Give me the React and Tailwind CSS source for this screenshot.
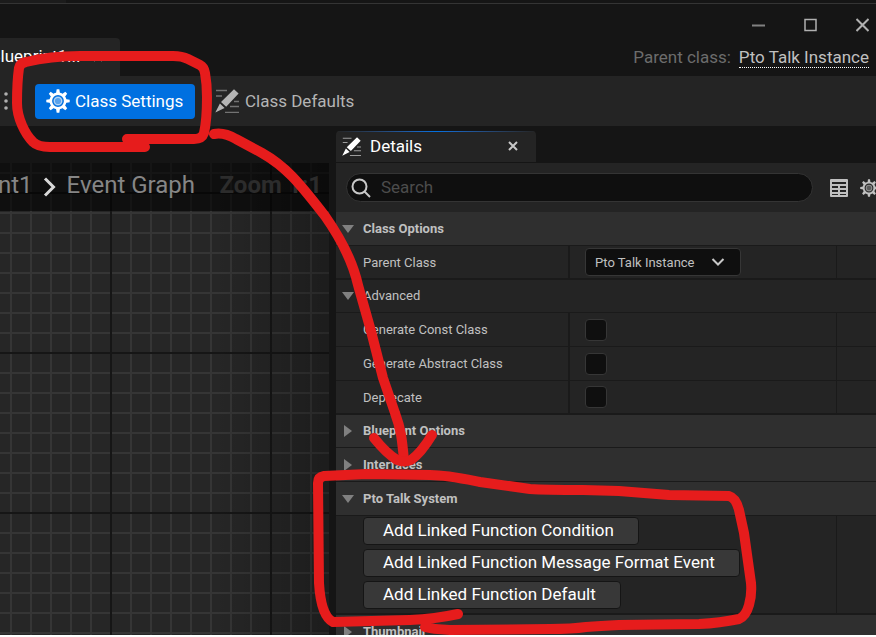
import React from "react";

function Gear({ size, className = "" }) {
  return (
    <svg width={size} height={size} viewBox="0 0 24 24" fill="none" className={"shrink-0 " + className} aria-hidden="true">
      <circle cx="12" cy="12" r="7.200" stroke="currentColor" strokeWidth="2.600" />
      <circle cx="12" cy="12" r="3.800" fill="currentColor" fillOpacity="0.35" stroke="currentColor" strokeOpacity="0.6" strokeWidth="1.400" />
      {[0, 45, 90, 135, 180, 225, 270, 315].map((a) => (
        <path key={a} d="M9.900 5 10.700 0.300h2.600L14.100 5z" fill="currentColor" transform={`rotate(${a} 12 12)`} />
      ))}
    </svg>
  );
}

function PencilLines({ size, className = "" }) {
  return (
    <svg width={size} height={size} viewBox="0 0 24 24" className={"shrink-0 " + className} aria-hidden="true">
      <path d="M1 1.500h11M1 7h6M19 12.500h5M15 17.500h9M10 23.300h14" stroke="currentColor" strokeWidth="1.300" opacity="0.55" />
      <path d="M19 0.300 23.600 4.600 11.200 17.800 6 13zM4.900 14.400 9.600 18.900 0.300 23.600z" fill="currentColor" />
    </svg>
  );
}

function Triangle({ open }) {
  return (
    <svg width="14" height="14" viewBox="0 0 14 14" className="shrink-0 text-[#808080]" aria-hidden="true">
      <path d={open ? "M1 3h12L7 11z" : "M3 1v12L11 7z"} fill="currentColor" />
    </svg>
  );
}

function Header({ title, open, className = "" }) {
  return (
    <button type="button" aria-expanded={open} className={"flex w-full shrink-0 items-center gap-2 border-b border-[#1a1a1a] bg-[#2f2f2f] pl-[5px] text-left text-[13px] font-bold text-[#c0c0c0] " + className}>
      <Triangle open={open} />
      {title}
    </button>
  );
}

function Row({ label, id, last, children }) {
  return (
    <div className={"flex h-[34px] shrink-0 border-[#1a1a1a] " + (last ? "border-b-2" : "border-b")}>
      <label htmlFor={id} className="flex w-[234px] shrink-0 items-center border-r-2 border-[#1a1a1a] pl-[27px] pt-px text-[13px] text-[#c0c0c0]">
        {label}
      </label>
      <div className="flex flex-1 items-center pl-[15px]">{children}</div>
      <div className="w-10 shrink-0 border-l border-[#1a1a1a]" />
    </div>
  );
}

function Check({ id }) {
  return <input id={id} type="checkbox" className="size-[22px] appearance-none rounded border border-[#363636] bg-[#0f0f0f] checked:bg-[#0070e0]" />;
}

function Graph() {
  return (
    <section className="relative w-[329px] shrink-0 overflow-hidden bg-[#262626]">
      <svg className="absolute inset-0 size-full" aria-hidden="true">
        <defs>
          <pattern id="minor" x="10" y="9" width="20" height="20" patternUnits="userSpaceOnUse">
            <path d="M0 1H20M1 0V20" stroke="#353535" strokeWidth="2" />
          </pattern>
          <pattern id="major" x="110" y="29" width="160" height="160" patternUnits="userSpaceOnUse">
            <path d="M0 1H160M1 0V160" stroke="#161616" strokeWidth="2" />
          </pattern>
          <linearGradient id="edge">
            <stop offset="0.65" stopColor="#000" stopOpacity="0" />
            <stop offset="1" stopColor="#000" stopOpacity="0.25" />
          </linearGradient>
        </defs>
        <rect width="100%" height="100%" fill="url(#minor)" />
        <rect width="100%" height="100%" fill="url(#major)" />
        <rect width="100%" height="100%" fill="url(#edge)" />
      </svg>
      <div className="relative flex h-12 items-center whitespace-nowrap bg-black/60 pb-1 text-2xl text-[#868686]">
        <span className="-ml-0.5">nt1</span>
        <svg width="14" height="22" viewBox="0 0 14 22" className="ml-[10px] mt-1 shrink-0" fill="none" stroke="#d8d8d8" strokeWidth="3" aria-hidden="true">
          <path d="M2 2.500 10.500 11 2 19.500" />
        </svg>
        <span className="ml-[10px]">Event Graph</span>
        <span className="ml-auto pr-[7px] font-bold text-[#2c2c2c]">Zoom 1:1</span>
      </div>
    </section>
  );
}

function Details() {
  return (
    <section className="flex min-w-0 flex-1 flex-col overflow-hidden bg-[#242424]">
      <div className="flex h-[49px] shrink-0 items-center pl-[10px]">
        <div className="-mr-[3px] flex h-[29px] min-w-0 flex-1 items-center gap-[10px] rounded-full border border-[#343434] bg-[#0f0f0f] pl-1">
          <svg width="20" height="20" viewBox="0 0 20 20" fill="none" stroke="#c8c8c8" strokeWidth="2" className="shrink-0" aria-hidden="true">
            <circle cx="8.500" cy="8.500" r="7" />
            <path d="m13.500 13.500 5.500 5.500" />
          </svg>
          <input aria-label="Search" placeholder="Search" className="min-w-0 flex-1 bg-transparent pb-0.5 text-[17px] leading-6 text-[#c0c0c0] outline-none placeholder:text-[#4c4c4c]" />
        </div>
        <button type="button" aria-label="Property matrix" className="ml-5 shrink-0">
          <svg width="18" height="18" viewBox="0 0 18 18" aria-hidden="true">
            <rect width="18" height="18" rx="1" fill="#c0c0c0" />
            <path d="M2 3h14v2H2zM2 7h6v2H2zM10 7h6v2h-6zM2 11h6v2H2zM10 11h6v2h-6zM2 15h6v1H2zM10 15h6v1h-6z" fill="#242424" />
          </svg>
        </button>
        <button type="button" aria-label="Settings" className="-mr-0.5 ml-3 shrink-0 text-[#c0c0c0]">
          <Gear size={18} />
        </button>
      </div>
      <Header title="Class Options" open className="h-[34px]" />
      <Row label="Parent Class" id="parent" last>
        <span className="relative flex items-center">
          <select id="parent" className="h-7 w-[156px] appearance-none rounded border border-[#363636] bg-[#0f0f0f] pl-[9px] pt-px text-[13px] text-[#c0c0c0]">
            <option>Pto Talk Instance</option>
          </select>
          <svg width="14" height="10" viewBox="0 0 14 10" fill="none" stroke="#c8c8c8" strokeWidth="2" className="pointer-events-none absolute right-4" aria-hidden="true">
            <path d="m1.500 2 5.500 5.500L12.500 2" />
          </svg>
        </span>
      </Row>
      <button type="button" aria-expanded="true" className="flex h-[33px] w-full shrink-0 items-center gap-2 border-b border-[#1a1a1a] pl-[5px] text-left text-[13px] text-[#c0c0c0]">
        <Triangle open />
        Advanced
      </button>
      <Row label="Generate Const Class" id="const"><Check id="const" /></Row>
      <Row label="Generate Abstract Class" id="abstract"><Check id="abstract" /></Row>
      <Row label="Deprecate" id="deprecate" last><Check id="deprecate" /></Row>
      <Header title="Blueprint Options" open={false} className="h-[33px]" />
      <Header title="Interfaces" open={false} className="h-[34px]" />
      <Header title="Pto Talk System" open className="h-[34px]" />
      <div className="flex shrink-0 border-b-2 border-[#1a1a1a]">
        <div className="flex flex-1 flex-col items-start gap-1 pb-1 pl-[27px] pt-px">
          {["Condition", "Message Format Event", "Default"].map((name) => (
            <button key={name} type="button" className="flex h-7 items-center whitespace-nowrap rounded border border-[#151515] bg-[#383838] pb-0.5 pl-[19px] pr-6 text-[17px] leading-6 text-white">
              Add Linked Function {name}
            </button>
          ))}
        </div>
        <div className="w-10 shrink-0 border-l border-[#1a1a1a]" />
      </div>
      <Header title="Thumbnail" open={false} className="h-[34px]" />
    </section>
  );
}

function Markup() {
  return (
    <svg width="876" height="637" className="pointer-events-none absolute left-0 top-0" fill="none" stroke="#e61c1c" strokeWidth="10" strokeLinecap="round" strokeLinejoin="round" aria-hidden="true">
      <path d="M145 147H50Q38 147 33 142C25 134 17 118 17 103Q17 82 19 68Q20 63 26 62Q50 56 80 56H173Q182 56 188 59L200 65Q204 67 205 73Q207 84 207 97Q207 120 204 133Q202 139 194 139H127" />
      <path d="M214 134Q224 132 236 139L262 153C285 166 298 181 325 216C346 246 354 267 358 285L371 331L383 378L395 413C401 429 402 439 404 460" />
      <path d="M374 438Q386 453 397 460Q404 463 411 460Q421 453 432 435" />
      <path d="M458 614Q435 619 410 620L333 622C323 617 320 600 319 583L318 483Q318 477 324 476L367 474L430 475C447 475 465 479 480 482L530 489Q545 490 583 490L619 491L669 495L729 496Q736 498 739 510L744 533L751 583Q752 595 749 605Q746 616 739 619Q720 623 699 624L619 625Q600 626 586 627Q572 629 550 629L450 630Q432 629 425 627" />
    </svg>
  );
}

export default function App() {
  return (
    <main className="relative flex h-screen flex-col overflow-hidden border-b-2 border-white bg-[#151515] font-['Roboto','Liberation_Sans',sans-serif]">
      <header className="flex h-[76px] shrink-0 justify-between">
        <div className="flex flex-1 flex-col">
          <div className="h-[3px] w-[66px] bg-[#1c1c1c]" />
          <div className="mt-auto flex h-[38px] w-[120px] items-center overflow-hidden rounded-tr bg-[#242424]">
            <span className="-ml-[10px] whitespace-nowrap text-[17px] text-white">Blueprint1...</span>
            <svg width="10" height="10" viewBox="0 0 10 10" stroke="#c0c0c0" strokeWidth="1.500" className="ml-3 shrink-0" aria-hidden="true">
              <path d="m1 1 8 8M9 1 1 9" />
            </svg>
          </div>
        </div>
        <div className="flex flex-col items-end justify-between pb-2 pr-[7px] pt-[18px]">
          <div className="flex items-center gap-[39px] text-[#b0b0b0]">
            <button type="button" aria-label="Minimize"><svg width="13" height="14" viewBox="0 0 13 14" stroke="currentColor" strokeWidth="2" opacity="0.7"><path d="M0 7.500h13" /></svg></button>
            <button type="button" aria-label="Maximize"><svg width="13" height="14" viewBox="0 0 13 14" fill="none" stroke="currentColor" strokeWidth="1.500"><rect x="1" y="1.500" width="11" height="11" /></svg></button>
            <button type="button" aria-label="Close"><svg width="13" height="14" viewBox="0 0 13 14" stroke="currentColor" strokeWidth="2"><path d="m0.500 1 12 12M12.500 1l-12 12" /></svg></button>
          </div>
          <p className="flex gap-2 whitespace-nowrap text-[17px] leading-5 text-[#6c6c6c]">
            Parent class:
            <a href="#parent" className="border-b border-dotted border-white text-[#c0c0c0]">Pto Talk Instance</a>
          </p>
        </div>
      </header>
      <div className="absolute inset-x-0 top-[3px] h-px bg-[#343434]" />

      <nav className="flex h-[50px] shrink-0 items-center bg-[#242424] text-[17px]">
        <svg width="4" height="18" viewBox="0 0 4 18" fill="#b0b0b0" className="ml-1 shrink-0" aria-hidden="true">
          <circle cx="2" cy="2" r="1.800" /><circle cx="2" cy="9" r="1.800" /><circle cx="2" cy="16" r="1.800" />
        </svg>
        <button type="button" className="ml-[27px] flex h-[35px] w-40 shrink-0 items-center gap-[5px] rounded bg-[#0070e0] pl-[11px] text-white">
          <Gear size={24} />
          <span className="pt-0.5">Class Settings</span>
        </button>
        <button type="button" className="ml-5 flex shrink-0 items-center gap-1.5 text-[#b4b4b4]">
          <PencilLines size={24} />
          <span className="pt-0.5">Class Defaults</span>
        </button>
      </nav>

      <div className="flex h-[37px] shrink-0 items-start pl-[336px] pt-[5px]">
        <div className="relative flex h-[31px] w-[200px] items-center overflow-hidden rounded-t bg-[#242424] pl-[6px] text-[17px] text-white">
          <div className="absolute inset-x-0 top-0 h-px bg-linear-to-r from-[#242424] via-[#0070e0] to-[#242424]" />
          <PencilLines size={19} />
          <span className="ml-[9px]">Details</span>
          <button type="button" aria-label="Close tab" className="ml-auto mr-[18px]">
            <svg width="10" height="10" viewBox="0 0 10 10" stroke="#c8c8c8" strokeWidth="2" className="mb-0.5" aria-hidden="true"><path d="m1 1 8 8M9 1 1 9" /></svg>
          </button>
        </div>
      </div>

      <div className="flex min-h-0 flex-1 gap-[7px]">
        <Graph />
        <Details />
      </div>
      <Markup />
    </main>
  );
}
